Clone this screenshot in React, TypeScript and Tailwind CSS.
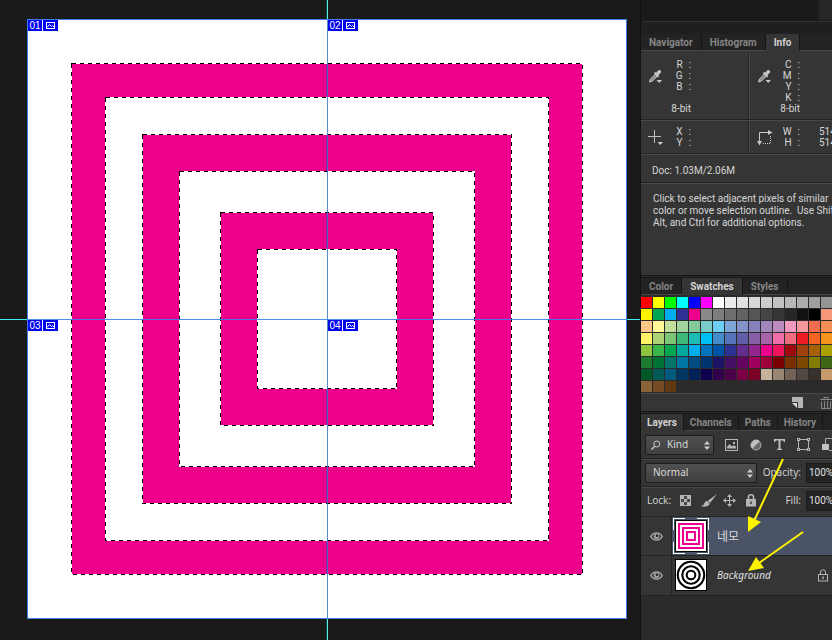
import type { ReactNode } from "react";

const SELECTION_EDGES = [44, 78, 115, 152, 193, 230];

const SWATCH_ROWS: string[][] = [
  ["#ff0000", "#ffff00", "#00ff00", "#00ffff", "#0000ff", "#ff00ff", "#ffffff", "#ebebeb", "#e1e1e1", "#d7d7d7", "#cccccc", "#c2c2c2", "#b7b7b7", "#acacac", "#a0a0a0", "#959595"],
  ["#fff200", "#00a651", "#00aeef", "#2e3192", "#ec008c", "#898989", "#7d7d7d", "#707070", "#626262", "#555555", "#464646", "#363636", "#262626", "#111111", "#000000", "#f7977a"],
  ["#fdc689", "#fff799", "#c4df9b", "#a3d39c", "#82ca9c", "#7accc8", "#6dcff6", "#7ea7d8", "#8393ca", "#8781bd", "#a186be", "#bd8cbf", "#f49ac1", "#f5989d", "#f26c4f", "#f68e56"],
  ["#fff467", "#acd373", "#7cc576", "#3cb878", "#1cbbb4", "#00bff3", "#448ccb", "#5574b9", "#605ca8", "#855fa8", "#a763a8", "#f06ea9", "#f26d7d", "#ed1c24", "#f26522", "#f7941d"],
  ["#8dc63f", "#39b54a", "#00a651", "#00a99d", "#00aeef", "#0072bc", "#0054a6", "#2e3192", "#662d91", "#92278f", "#ec008c", "#ed145b", "#9e0b0f", "#a0410d", "#a36209", "#aba000"],
  ["#1d7a30", "#007236", "#00746b", "#0076a3", "#004b80", "#003471", "#1b1464", "#440e62", "#630460", "#9e005d", "#9e0039", "#790000", "#7b2e00", "#7d4900", "#827b00", "#406618"],
  ["#005826", "#005952", "#005b7f", "#003663", "#002157", "#0d004c", "#32004b", "#4b0049", "#7b0046", "#7a0026", "#c7b299", "#998675", "#736357", "#534741", "#37302d", "#c69c6d"],
  ["#8c6239", "#754c24", "#603913"],
];

function SliceTag({ id }: { id: string }) {
  return (
    <div className="flex items-start gap-px p-px">
      <span className="h-[11px] w-[14px] bg-[#0000f4] text-center font-['Liberation_Sans',Arial,sans-serif] text-[10px] leading-[11px] text-white">
        {id}
      </span>
      <span className="flex h-[11px] w-[15px] items-center justify-center bg-[#0000f4]">
        <svg width="9" height="7" viewBox="0 0 9 7" fill="none" stroke="white" shapeRendering="crispEdges">
          <rect x="0.5" y="0.5" width="8" height="6" />
          <path d="M1 5.5L3.5 2.5L5.5 4.5L6.5 3.5L8 5" shapeRendering="auto" />
        </svg>
      </span>
    </div>
  );
}

function Artwork() {
  return (
    <svg width="600" height="600" viewBox="0 0 600 600" className="block" shapeRendering="crispEdges">
      <rect width="600" height="600" fill="#ffffff" />
      {SELECTION_EDGES.map((e, i) => (
        <rect key={e} x={e + 1 - (i % 2)} y={e + 1 - (i % 2)} width={598 - 2 * e + 2 * (i % 2)} height={598 - 2 * e + 2 * (i % 2)} fill={i % 2 ? "#ffffff" : "#ec008c"} />
      ))}
      {SELECTION_EDGES.map((e) => (
        <g key={e} fill="none">
          <rect x={e + 0.5} y={e + 0.5} width={599 - 2 * e} height={599 - 2 * e} stroke="#ffffff" />
          <rect x={e + 0.5} y={e + 0.5} width={599 - 2 * e} height={599 - 2 * e} stroke="#000000" strokeDasharray="4 4" />
        </g>
      ))}
      <path d="M299.5 45V78M299.5 116V152M299.5 194V230M299.5 370V406M299.5 448V484M299.5 522V555" stroke="#a01a98" />
      <path d="M300.5 0V600" stroke="#3a76c4" strokeOpacity="0.85" />
      <path d="M0 300.5H600" stroke="#3a80f0" strokeOpacity="0.9" />
      <rect x="0.5" y="0.5" width="599" height="599" fill="none" stroke="#3f7de8" />
    </svg>
  );
}

function Tabs({ names, active, compact }: { names: string[]; active: string; compact?: boolean }) {
  const pad = compact ? "px-[6px]" : "px-2";
  return (
    <div role="tablist" className="flex h-[17px] border-b border-[#454545] bg-[#232323] font-['Roboto',sans-serif] text-[10px] leading-[17px] font-bold">
      {names.map((n) =>
        n === active ? (
          <button key={n} role="tab" aria-selected="true" className={`-mb-px h-[17px] shrink-0 border-r border-[#151515] bg-[#353535] text-[#d2d2d2] ${pad}`}>
            {n}
          </button>
        ) : (
          <button key={n} role="tab" aria-selected="false" className={`h-4 shrink-0 border-r border-[#151515] text-[#858585] ${pad}`}>
            {n}
          </button>
        ),
      )}
    </div>
  );
}

function Dropper() {
  return (
    <svg width="16" height="16" viewBox="0 0 16 16">
      <path d="M1.5 13L2.5 10L7.5 5L9.5 7L4.5 12Z" fill="#8a8a8a" stroke="#c8c8c8" />
      <path d="M7 3L8.5 3.5L10 1.5Q12 0.5 13 2Q13.500 3.500 12 4.500L10.500 6L11 7.500L10 8.500L6 4.500Z" fill="#c8c8c8" />
      <path d="M8.500 11H14L11.250 14Z" fill="#c8c8c8" />
    </svg>
  );
}

function Cross() {
  return (
    <svg width="16" height="16" viewBox="0 0 16 16">
      <path d="M6.500 0V13M0 6.500H13" stroke="#c0c0c0" />
      <path d="M9.500 12H15L12.250 15Z" fill="#c8c8c8" />
    </svg>
  );
}

function Extent() {
  return (
    <svg width="16" height="16" viewBox="0 0 16 16" fill="none" stroke="#c8c8c8">
      <path d="M2.500 12V2.500H12" />
      <path d="M11 0L15.500 2.500L11 5ZM0 11L2.500 15.500L5 11Z" fill="#c8c8c8" stroke="none" />
      <path d="M13.500 6V13.500H6" strokeDasharray="1 1" />
    </svg>
  );
}

function Readout({ icon, labels, values, depth, top }: { icon: ReactNode; labels: string[]; values?: string[]; depth?: boolean; top?: boolean }) {
  return (
    <div className={top ? "flex h-[66px] pt-[6px]" : "flex h-[31px] pt-1"}>
      <div className={top ? "ml-[7px] w-4 pt-[10px]" : "ml-[7px] w-4 pt-1"}>{icon}</div>
      <div className="w-[27px] font-['Roboto',sans-serif] text-[10px] leading-[11px] text-[#d6d6d6]">
        {labels.map((l) => (
          <div key={l} className="flex justify-end gap-[6px]">
            <span>{l}</span>
            <span>:</span>
          </div>
        ))}
        {depth && labels.length === 3 && <div className="h-[11px]" />}
        {depth && <div className="text-right whitespace-nowrap">8-bit</div>}
      </div>
      {values && (
        <div className="pl-[19px] font-['Roboto',sans-serif] text-[10px] leading-[11px] text-[#d6d6d6]">
          {values.map((v, i) => (
            <div key={i}>{v}</div>
          ))}
        </div>
      )}
    </div>
  );
}

function InfoPanel() {
  return (
    <section className="h-[224px] bg-[#353535]">
      <div className="grid grid-cols-[108px_1fr] pt-[2px]">
        <div className="border-r border-[#262626]">
          <Readout top depth icon={<Dropper />} labels={["R", "G", "B"]} />
        </div>
        <div className="border-l border-[#4a4a4a]">
          <Readout top depth icon={<Dropper />} labels={["C", "M", "Y", "K"]} />
        </div>
      </div>
      <div className="grid grid-cols-[108px_1fr] border-t border-[#222222] pt-px shadow-[inset_0_1px_0_#4a4a4a]">
        <div className="border-r border-[#262626] pt-px">
          <Readout icon={<Cross />} labels={["X", "Y"]} />
        </div>
        <div className="border-l border-[#4a4a4a] pt-px">
          <Readout icon={<Extent />} labels={["W", "H"]} values={["514", "514"]} />
        </div>
      </div>
      <p className="h-[29px] border-t border-[#222222] pl-[11px] font-['Roboto',sans-serif] text-[10px] leading-[34px] text-[#d6d6d6] shadow-[inset_0_1px_0_#4a4a4a]">
        Doc: 1.03M/2.06M
      </p>
      <p className="border-t border-[#222222] pt-[10px] pl-3 font-['Roboto',sans-serif] text-[10px] leading-3 whitespace-pre text-[#d6d6d6] shadow-[inset_0_1px_0_#4a4a4a]">
        {"Click to select adjacent pixels of similar\ncolor or move selection outline.  Use Shift,\nAlt, and Ctrl for additional options."}
      </p>
    </section>
  );
}

function SwatchesPanel() {
  return (
    <section>
      <div className="flex h-[98px] flex-col gap-px bg-[#2b2b2b] pt-[2px]">
        {SWATCH_ROWS.map((row, i) => (
          <div key={i} className="flex gap-px">
            {row.map((c, j) => (
              <button key={j} aria-label={c} className="h-[11px] w-[11px] shrink-0" style={{ backgroundColor: c }} />
            ))}
          </div>
        ))}
      </div>
      <div className="flex h-[18px] items-center border-t border-[#4a4a4a] bg-[#353535] pl-[151px]">
        <button aria-label="New swatch" className="mr-[17px] shrink-0">
          <svg width="11" height="11" viewBox="0 0 11 11">
            <path d="M0 0H11V11H6V5H0Z" fill="#b5b5b5" />
            <path d="M0 6H5V11Z" fill="#d8d8d8" />
          </svg>
        </button>
        <button aria-label="Delete swatch" className="shrink-0">
          <svg width="12" height="12" viewBox="0 0 12 12" fill="none" stroke="#858585">
            <path d="M0 2.500H12M4 2V0.500H8V2M1.500 4.500V11.500H10.500V4.500M4.500 4V11M7.500 4V11" />
          </svg>
        </button>
      </div>
    </section>
  );
}

function Stepper() {
  return (
    <svg width="6" height="9" viewBox="0 0 6 9" fill="#cfcfcf" className="pointer-events-none absolute top-[6px] right-1">
      <path d="M0 3.500L3 0L6 3.500ZM0 5.500L3 9L6 5.500Z" />
    </svg>
  );
}

function FilterIcons() {
  return (
    <div className="flex shrink-0 items-center gap-3 pl-[11px]">
      <button aria-label="Pixel layers">
        <svg width="13" height="12" viewBox="0 0 13 12">
          <rect x="0.500" y="0.500" width="12" height="11" fill="none" stroke="#b5b5b5" />
          <path d="M2 9.500V8L4.500 5L7 7.500L9 6L11 8V9.500Z" fill="#b5b5b5" />
          <rect x="8" y="3" width="2" height="2" fill="#b5b5b5" />
        </svg>
      </button>
      <button aria-label="Adjustment layers">
        <svg width="12" height="12" viewBox="0 0 12 12">
          <circle cx="6" cy="6" r="5" fill="#686868" stroke="#a8a8a8" />
          <path d="M9.800 2.200A5.400 5.400 0 0 0 2.200 9.800Z" fill="#c0c0c0" />
        </svg>
      </button>
      <button aria-label="Type layers">
        <svg width="11" height="11" viewBox="0 0 11 11" fill="#bcbcbc">
          <path d="M0 0H11V3H10L9 1.500H6.500V9.500L8 10V11H3V10L4.500 9.500V1.500H2L1 3H0Z" />
        </svg>
      </button>
      <button aria-label="Shape layers">
        <svg width="13" height="13" viewBox="0 0 13 13" fill="none" stroke="#b5b5b5" shapeRendering="crispEdges">
          <path d="M1.500 3V10M11.500 3V10M3 1.500H10M3 11.500H10" />
          <path d="M0.500 0.500h2v2h-2zM10.500 0.500h2v2h-2zM0.500 10.500h2v2h-2zM10.500 10.500h2v2h-2z" fill="#353535" />
        </svg>
      </button>
      <button aria-label="Smart objects">
        <svg width="13" height="13" viewBox="0 0 13 13">
          <path d="M3.500 6V0.500H12.500V12.500H7" fill="none" stroke="#a8a8a8" />
          <rect x="0" y="6" width="7" height="6" fill="#c0c0c0" />
        </svg>
      </button>
    </div>
  );
}

function LockIcon({ solid }: { solid?: boolean }) {
  return (
    <svg width="10" height="13" viewBox="0 0 10 13" fill="none" stroke="#b5b5b5">
      <path d="M2.500 5.500V3Q2.500 0.800 5 0.800Q7.500 0.800 7.500 3V5.500" strokeWidth={solid ? 1.600 : 1} />
      <rect x="0.500" y="5.500" width="9" height="6.500" fill={solid ? "#b5b5b5" : "#353535"} />
      <path d="M5 7.500V10" stroke={solid ? "#353535" : "#b5b5b5"} strokeWidth="1.500" />
    </svg>
  );
}

function Eye() {
  return (
    <svg width="13" height="9" viewBox="0 0 13 9" fill="none" stroke="#b0b0b0">
      <path d="M0.800 4.500Q3 0.900 6.500 0.900T12.200 4.500Q10 8.100 6.500 8.100T0.800 4.500Z" strokeWidth="1.400" />
      <circle cx="6.500" cy="4.300" r="2.800" fill="#a0a0a0" stroke="none" />
      <circle cx="7" cy="3.800" r="1.300" fill="#222222" stroke="none" />
    </svg>
  );
}

function SquaresThumb() {
  return (
    <svg width="36" height="36" viewBox="0 0 36 36" fill="none" shapeRendering="crispEdges">
      <path d="M0.500 12V0.500H12M24 0.500H35.500V12M35.500 24V35.500H24M12 35.500H0.500V24" stroke="#ffffff" />
      <rect x="2.500" y="2.500" width="31" height="31" fill="#ffffff" stroke="#000000" />
      <g stroke="#ec008c" strokeWidth="2">
        <rect x="6" y="6" width="24" height="24" />
        <rect x="10" y="10" width="16" height="16" />
        <rect x="14" y="14" width="8" height="8" />
      </g>
    </svg>
  );
}

function CirclesThumb() {
  return (
    <svg width="36" height="36" viewBox="0 0 36 36" fill="none">
      <rect x="2.500" y="2.500" width="31" height="31" fill="#ffffff" stroke="#000000" />
      <g stroke="#000000" strokeWidth="2.100">
        <circle cx="18" cy="18" r="13.200" />
        <circle cx="18" cy="18" r="8.700" />
        <circle cx="18" cy="18" r="4.300" />
      </g>
    </svg>
  );
}

const FIELD = "h-[20px] w-12 shrink-0 border border-[#1a1a1a] bg-[#242424] pl-[2px] font-['Roboto',sans-serif] text-[10px] text-[#e0e0e0]";

function LayersPanel() {
  return (
    <section className="flex flex-1 flex-col bg-[#2b2b2b]">
      <div className="flex h-[27px] items-center bg-[#353535] pl-1">
        <div className="relative shrink-0">
          <svg width="10" height="10" viewBox="0 0 10 10" fill="none" stroke="#c8c8c8" className="pointer-events-none absolute top-[5px] left-[6px]">
            <circle cx="5.800" cy="4" r="3" />
            <path d="M3.500 6.500L0.500 9.500" strokeWidth="1.500" />
          </svg>
          <select aria-label="Filter type" className="block h-[20px] w-[69px] appearance-none rounded-[2px] border border-[#1c1c1c] bg-linear-to-b from-[#505050] to-[#404040] pl-[21px] text-[10px] text-[#dadada]">
            <option>Kind</option>
          </select>
          <Stepper />
        </div>
        <FilterIcons />
      </div>
      <div className="flex h-[28px] items-center border-t border-[#222222] bg-[#353535] pl-1 shadow-[inset_0_1px_0_#484848]">
        <div className="relative shrink-0">
          <select aria-label="Blend mode" className="block h-[20px] w-[112px] appearance-none rounded-[2px] border border-[#1c1c1c] bg-linear-to-b from-[#505050] to-[#404040] pl-[7px] text-[10px] text-[#dadada]">
            <option>Normal</option>
          </select>
          <Stepper />
        </div>
        <label htmlFor="opacity" className="w-[49px] shrink-0 pr-[5px] text-right text-[10px] text-[#d0d0d0]">
          Opacity:
        </label>
        <input id="opacity" defaultValue="100%" className={FIELD} />
      </div>
      <div className="flex h-[30px] items-center border-t border-[#222222] bg-[#353535] pb-[2px] pl-[6px] shadow-[inset_0_1px_0_#484848]">
        <span className="w-[33px] shrink-0 text-[10px] text-[#d0d0d0]">Lock:</span>
        <div className="flex shrink-0 items-center gap-[10px]">
          <button aria-label="Lock transparent pixels">
            <svg width="11" height="11" viewBox="0 0 11 11" shapeRendering="crispEdges">
              <rect width="11" height="11" fill="#b5b5b5" />
              <path d="M4 1h3v3h-3zM1 4h3v3h-3zM7 4h3v3h-3zM4 7h3v3h-3z" fill="#484848" />
            </svg>
          </button>
          <button aria-label="Lock image pixels">
            <svg width="16" height="13" viewBox="0 0 16 13" fill="#b5b5b5">
              <path d="M16 0L9 9L6.500 7Z" />
              <path d="M6 7L9 10Q7 13 3 12.800L0 12Q3 11.500 3.500 9Q4.500 6.500 6 7Z" />
            </svg>
          </button>
          <button aria-label="Lock position" className="-ml-1">
            <svg width="13" height="13" viewBox="0 0 13 13" fill="#b5b5b5">
              <path d="M6.500 1V12M1 6.500H12" stroke="#b5b5b5" />
              <path d="M6.500 0L9 3H4ZM6.500 13L9 10H4ZM0 6.500L3 4V9ZM13 6.500L10 4V9Z" />
            </svg>
          </button>
          <button aria-label="Lock all">
            <LockIcon solid />
          </button>
        </div>
        <label htmlFor="fill" className="w-[50px] shrink-0 pr-[5px] text-right text-[10px] text-[#d0d0d0]">
          Fill:
        </label>
        <input id="fill" defaultValue="100%" className={FIELD} />
      </div>
      <div className="flex h-[39px] items-stretch border-t border-[#262626] bg-[#4b5466]">
        <button aria-label="Toggle visibility" className="flex w-[31px] shrink-0 items-center justify-center border-r border-[#262626] bg-[#353535]">
          <Eye />
        </button>
        <div className="flex items-center pl-px">
          <SquaresThumb />
          <span className="pl-2 font-['Noto_Sans_CJK_KR',sans-serif] text-[12px] leading-4 text-[#d8d8d8]">네모</span>
        </div>
      </div>
      <div className="flex h-[41px] items-stretch border-y border-[#222222] bg-[#353535]">
        <button aria-label="Toggle visibility" className="flex w-[31px] shrink-0 items-center justify-center border-r border-[#262626]">
          <Eye />
        </button>
        <div className="flex flex-1 items-center pr-1 pb-px pl-px">
          <CirclesThumb />
          <span className="flex-1 pl-2 text-[10px] leading-4 text-[#e0e0e0] italic">Background</span>
          <LockIcon />
        </div>
      </div>
    </section>
  );
}

function Arrows() {
  return (
    <svg width="70" height="120" viewBox="0 0 70 120" className="pointer-events-none absolute top-[456px] right-[20px]" fill="#fff200" stroke="#fff200">
      <path d="M41 3L12 65M61 76L17 107" strokeWidth="2" fill="none" />
      <path d="M6 60L19 66L6 76ZM14 101L22 112L6 115Z" stroke="none" />
    </svg>
  );
}

export default function App() {
  return (
    <div className="relative flex min-h-screen overflow-hidden bg-[#1a1a1a] font-['Noto_Sans','Noto_Sans_CJK_KR',sans-serif]">
      <main className="relative min-w-0 flex-1 overflow-hidden pt-[19px] pl-[27px]">
        <div className="absolute inset-y-0 left-[326px] w-[2px] border-l border-[#0e4442] bg-[#5ff0e4]" />
        <div className="absolute inset-x-0 top-[319px] h-px bg-[#40f0f0]" />
        <div className="relative h-[600px] w-[600px]">
          <Artwork />
          <div className="absolute inset-0 grid grid-cols-2 grid-rows-2">
            <SliceTag id="01" />
            <SliceTag id="02" />
            <SliceTag id="03" />
            <SliceTag id="04" />
          </div>
        </div>
      </main>
      <aside className="flex w-48 shrink-0 flex-col overflow-hidden border-l border-[#111111]">
        <div className="flex h-[21px] justify-end">
          <div className="h-5 w-[13px] bg-[#262626]" />
        </div>
        <div className="h-[13px] rounded-tl-[3px] border-t border-[#333333] bg-[#1f1f1f]" />
        <Tabs names={["Navigator", "Histogram", "Info"]} active="Info" />
        <InfoPanel />
        <div className="h-[3px] border-y border-[#161616] bg-[#2b2b2b]" />
        <Tabs names={["Color", "Swatches", "Styles"]} active="Swatches" />
        <SwatchesPanel />
        <div className="h-[3px] border-y border-[#161616] bg-[#2b2b2b]" />
        <Tabs compact names={["Layers", "Channels", "Paths", "History"]} active="Layers" />
        <LayersPanel />
      </aside>
      <Arrows />
    </div>
  );
}
